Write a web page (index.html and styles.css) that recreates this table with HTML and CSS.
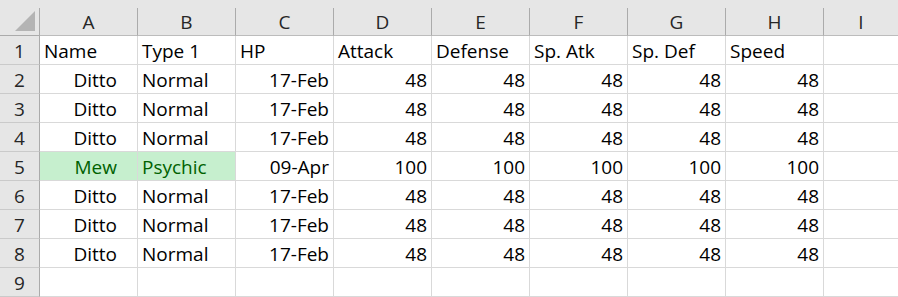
FILE: index.html
```html
<!DOCTYPE html>
<html>
<head>
<meta charset="utf-8">
<link rel="stylesheet" href="styles.css">
</head>
<body>
<div class="sheet">
  <div class="topstrip"></div>
  <div class="grid">
    <div class="hd corner"><svg width="39" height="28" viewBox="0 0 39 28"><polygon points="35,4 35,24 15,24" fill="#b4b4b4"/></svg></div>
    <div class="hd col">A</div><div class="hd col">B</div><div class="hd col">C</div><div class="hd col">D</div><div class="hd col">E</div><div class="hd col">F</div><div class="hd col">G</div><div class="hd col">H</div><div class="hd col last">I</div>

    <div class="hd row">1</div>
    <div class="c">Name</div><div class="c">Type 1</div><div class="c">HP</div><div class="c">Attack</div><div class="c">Defense</div><div class="c">Sp. Atk</div><div class="c">Sp. Def</div><div class="c">Speed</div><div class="c last"></div>

    <div class="hd row">2</div>
    <div class="c nm">Ditto</div><div class="c">Normal</div><div class="c r">17-Feb</div><div class="c r">48</div><div class="c r">48</div><div class="c r">48</div><div class="c r">48</div><div class="c r">48</div><div class="c last"></div>

    <div class="hd row">3</div>
    <div class="c nm">Ditto</div><div class="c">Normal</div><div class="c r">17-Feb</div><div class="c r">48</div><div class="c r">48</div><div class="c r">48</div><div class="c r">48</div><div class="c r">48</div><div class="c last"></div>

    <div class="hd row">4</div>
    <div class="c nm">Ditto</div><div class="c">Normal</div><div class="c r">17-Feb</div><div class="c r">48</div><div class="c r">48</div><div class="c r">48</div><div class="c r">48</div><div class="c r">48</div><div class="c last"></div>

    <div class="hd row">5</div>
    <div class="c nm good">Mew</div><div class="c good">Psychic</div><div class="c r">09-Apr</div><div class="c r">100</div><div class="c r">100</div><div class="c r">100</div><div class="c r">100</div><div class="c r">100</div><div class="c last"></div>

    <div class="hd row">6</div>
    <div class="c nm">Ditto</div><div class="c">Normal</div><div class="c r">17-Feb</div><div class="c r">48</div><div class="c r">48</div><div class="c r">48</div><div class="c r">48</div><div class="c r">48</div><div class="c last"></div>

    <div class="hd row">7</div>
    <div class="c nm">Ditto</div><div class="c">Normal</div><div class="c r">17-Feb</div><div class="c r">48</div><div class="c r">48</div><div class="c r">48</div><div class="c r">48</div><div class="c r">48</div><div class="c last"></div>

    <div class="hd row">8</div>
    <div class="c nm">Ditto</div><div class="c">Normal</div><div class="c r">17-Feb</div><div class="c r">48</div><div class="c r">48</div><div class="c r">48</div><div class="c r">48</div><div class="c r">48</div><div class="c last"></div>

    <div class="hd row">9</div>
    <div class="c"></div><div class="c"></div><div class="c"></div><div class="c"></div><div class="c"></div><div class="c"></div><div class="c"></div><div class="c"></div><div class="c last"></div>
  </div>
</div>
</body>
</html>
```

FILE: styles.css
```css
html, body {
  margin: 0;
  padding: 0;
  background: #ffffff;
}
.sheet {
  width: 898px;
  height: 297px;
  overflow: hidden;
  font-family: "Open Sans", "Liberation Sans", sans-serif;
  font-size: 19px;
  color: #000;
}
.topstrip {
  height: 8px;
  background: #e6e6e6;
}
.grid {
  display: grid;
  grid-template-columns: 40px repeat(8, 98px) 74px;
  grid-template-rows: 28px repeat(9, 29px);
}
.grid > div {
  box-sizing: border-box;
  display: flex;
  align-items: flex-end;
  white-space: nowrap;
  overflow: hidden;
  line-height: 24px;
}
.hd {
  background: #e6e6e6;
  color: #262626;
  justify-content: center;
}
.corner {
  border-right: 1px solid #ababab;
  border-bottom: 1px solid #ababab;
  align-items: stretch;
}
.corner svg { display: block; }
.col {
  border-right: 1px solid #ababab;
  border-bottom: 1px solid #bcbcbc;
  padding-bottom: 1px;
}
.col.last { border-right: none; }
.row {
  border-right: 1px solid #ababab;
  border-bottom: 1px solid #cacaca;
  padding-bottom: 1px;
}
.c {
  border-right: 1px solid #d9d9d9;
  border-bottom: 1px solid #d9d9d9;
  padding: 0 4px 1px 4px;
}
.c.last { border-right: none; }
.r { justify-content: flex-end; }
.nm { justify-content: flex-end; padding-right: 20px; }
.good {
  background: #c6efce;
  color: #006100;
}
```
